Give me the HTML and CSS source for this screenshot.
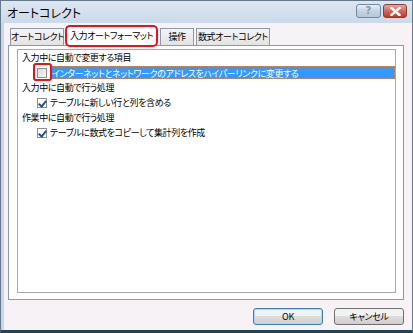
FILE: index.html
```html
<!DOCTYPE html>
<html lang="ja">
<head>
  <meta charset="UTF-8">
  <title>オートコレクト</title>
  <link rel="stylesheet" href="styles.css">
</head>
<body>
  <div class="window">
    <div class="titlebar">
      <span class="title">オートコレクト</span>
      <div class="caption-buttons">
        <button class="cap-btn help">?</button>
        <button class="cap-btn close">
          <svg width="11" height="9" viewBox="0 0 11 9"><path d="M1.5 1 L9.5 8 M9.5 1 L1.5 8" stroke="#fff" stroke-width="2.4" stroke-linecap="square"/></svg>
        </button>
      </div>
    </div>

    <div class="client">
      <div class="tabs">
        <div class="tab tab-auto">オートコレクト</div>
        <div class="tab tab-format active">入力オートフォーマット</div>
        <div class="tab tab-action">操作</div>
        <div class="tab tab-math">数式オートコレクト</div>
      </div>

      <div class="panel">
        <div class="listbox">
          <div class="row group">入力中に自動で変更する項目</div>
          <div class="row option selected">
            <span class="check"></span>
            <span class="label">インターネットとネットワークのアドレスをハイパーリンクに変更する</span>
            <span class="marker"></span>
          </div>
          <div class="row group">入力中に自動で行う処理</div>
          <div class="row option">
            <span class="check checked"></span>
            <span class="label">テーブルに新しい行と列を含める</span>
          </div>
          <div class="row group">作業中に自動で行う処理</div>
          <div class="row option">
            <span class="check checked"></span>
            <span class="label">テーブルに数式をコピーして集計列を作成</span>
          </div>
        </div>
      </div>

      <div class="actions">
        <button class="btn default">OK</button>
        <button class="btn">キャンセル</button>
      </div>
    </div>
  </div>
</body>
</html>
```

FILE: styles.css
```css
* {
  box-sizing: border-box;
  margin: 0;
  padding: 0;
}

body {
  width: 413px;
  height: 333px;
  background: #fff;
  font-family: "Noto Sans CJK JP", "Noto Sans", sans-serif;
  font-feature-settings: "palt";
  font-size: 9px;
  letter-spacing: -0.4px;
  color: #000;
}

.window {
  width: 413px;
  height: 333px;
  display: flex;
  flex-direction: column;
  background: #c9d8e9;
  border: 1px solid #66788a;
  border-bottom: 3px solid #1c4658;
  padding: 0 0 0 3px;
}

.titlebar {
  height: 22px;
  display: flex;
  align-items: flex-start;
  justify-content: space-between;
  background: linear-gradient(#dde7f2, #cbd9e9);
  margin-left: -3px;
  padding-left: 6px;
}

.title {
  font-size: 12px;
  letter-spacing: 0;
  line-height: 24px;
}

.caption-buttons {
  display: flex;
  gap: 2px;
  margin-top: 3px;
  margin-right: 5px;
}

.cap-btn {
  width: 25px;
  height: 14px;
  border: 1px solid #7487a0;
  border-radius: 3px;
  display: flex;
  align-items: center;
  justify-content: center;
  font-family: "DejaVu Sans", sans-serif;
  font-size: 10px;
  font-weight: bold;
  line-height: 1;
}

.help {
  background: linear-gradient(#e8eff7, #c4d3e4 50%, #b5c7dc);
  color: #8a97a8;
}

.close {
  width: 24px;
  border-color: #8a3d35;
  background: linear-gradient(#e7a79c, #d0685a 50%, #bd3b2a);
}

.client {
  flex: 1;
  background: #f7f2f5;
  padding: 3px 8px 0 4px;
  display: flex;
  flex-direction: column;
}

.tabs {
  display: flex;
  align-items: flex-end;
  height: 19px;
  margin-left: 2px;
  position: relative;
  z-index: 1;
}

.tab {
  height: 17px;
  line-height: 16px;
  text-align: center;
  white-space: nowrap;
  border: 1px solid #8d99a8;
  border-bottom: none;
  background: linear-gradient(#f4f4f4, #e3e3e3);
  margin-right: 2px;
}

.tab-auto { width: 54px; }
.tab-format { width: 91px; }
.tab-action { width: 34px; margin-left: 1px; }
.tab-math { width: 74px; }

.tab.active {
  height: 20px;
  line-height: 18px;
  background: #fff;
  margin-bottom: -1px;
  position: relative;
}

.tab.active::after {
  content: "";
  position: absolute;
  left: -2px;
  top: -2px;
  right: -2px;
  bottom: -1px;
  border: 2px solid #e3141c;
  border-radius: 5px;
}

.panel {
  height: 255px;
  background: #fff;
  border: 1px solid #8d99a8;
  padding: 3px 7px 6px 8px;
}

.listbox {
  height: 100%;
  border: 1px solid #a9a9a9;
  padding: 0 0 0 4px;
}

.row {
  height: 15px;
  line-height: 15px;
  display: flex;
  align-items: center;
  white-space: nowrap;
}

.option {
  padding-left: 15px;
  position: relative;
}

.check {
  width: 10px;
  height: 10px;
  border: 1px solid #8e8f8f;
  background: linear-gradient(135deg, #dcdcdc, #f6f6f6);
  margin-right: 3px;
  flex: none;
  position: relative;
}

.check.checked {
  background: #fff;
}

.check.checked::after {
  content: "";
  position: absolute;
  left: 2px;
  top: 0;
  width: 3px;
  height: 6px;
  border: solid #27508f;
  border-width: 0 2px 2px 0;
  transform: rotate(40deg);
}

.selected .label {
  flex: 1;
  height: 13px;
  line-height: 13px;
  background: #3399ff;
  color: #fff;
  padding-left: 2px;
  border: 1px dotted #c88a60;
  border-left: none;
}

.marker {
  position: absolute;
  left: 11px;
  top: -2px;
  width: 19px;
  height: 18px;
  border: 2px solid #e3141c;
  border-radius: 3px;
}

.actions {
  display: flex;
  justify-content: flex-end;
  gap: 11px;
  margin-top: 8px;
}

.btn {
  width: 70px;
  height: 17px;
  border: 1px solid #707070;
  border-radius: 3px;
  background: linear-gradient(#f2f2f2 50%, #dddddd 50%, #cfcfcf);
  font-family: "Noto Sans CJK JP", sans-serif;
  font-feature-settings: "palt";
  font-size: 9px;
  letter-spacing: -0.3px;
  line-height: 14px;
}

.btn.default {
  border-color: #3c7fb1;
  box-shadow: inset 0 0 0 1px #a5d8f3;
}
```
